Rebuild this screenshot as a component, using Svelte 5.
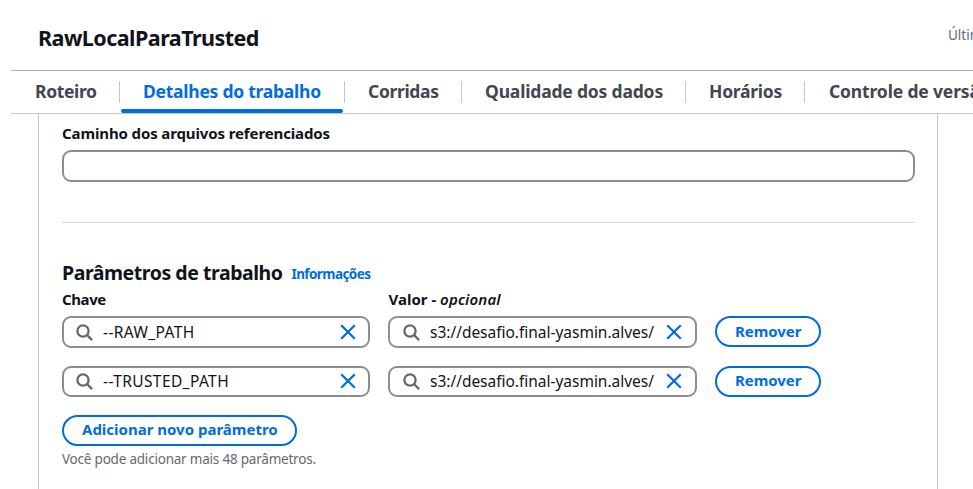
<script>
  const tabs = [
    { id: 'script', label: 'Roteiro', width: 108 },
    { id: 'details', label: 'Detalhes do trabalho', width: 225, active: true },
    { id: 'runs', label: 'Corridas', width: 117 },
    { id: 'quality', label: 'Qualidade dos dados', width: 224 },
    { id: 'schedules', label: 'Horários', width: 119 },
    { id: 'version', label: 'Controle de versão', width: 210 }
  ];
  const parameters = [
    { key: '--RAW_PATH', value: 's3://desafio.final-yasmin.alves/' },
    { key: '--TRUSTED_PATH', value: 's3://desafio.final-yasmin.alves/' }
  ];
</script>

{#snippet field(text, kind)}
  <div class="field {kind}">
    <svg class="search" viewBox="0 0 17 17" aria-hidden="true">
      <circle cx="7" cy="7" r="5.6" />
      <path d="M11 11L16.1 16.1" />
    </svg>
    <span class="entry">{text}</span>
    <svg class="clear" viewBox="0 0 16 16" aria-hidden="true">
      <path d="M1.2 1.2L14.8 14.8M14.8 1.2L1.2 14.8" />
    </svg>
  </div>
{/snippet}

<main>
  <header>
    <h1>RawLocalParaTrusted</h1>
    <span class="modified">Última modificação</span>
  </header>
  <nav>
    {#each tabs as tab}
      <div class="tab" class:active={tab.active} style:width="{tab.width}px">
        <span class="t-{tab.id}">{tab.label}</span>
      </div>
    {/each}
  </nav>
  <section>
    <div class="label path">Caminho dos arquivos referenciados</div>
    <div class="box"></div>
    <hr />
    <div class="heading">
      <h2>Parâmetros de trabalho</h2>
      <span class="info">Informações</span>
    </div>
    <div class="columns">
      <div class="label name">Chave</div>
      <div class="label">Valor - <em>opcional</em></div>
    </div>
    <div class="rows">
      {#each parameters as parameter}
        <div class="row">
          {@render field(parameter.key, 'key')}
          {@render field(parameter.value, 'value')}
          <button class="remove">Remover</button>
        </div>
      {/each}
    </div>
    <button class="add">Adicionar novo parâmetro</button>
    <div class="hint">Você pode adicionar mais 48 parâmetros.</div>
  </section>
</main>

<style>
  :global(body) { background: #fff; overflow: hidden; }
  main {
    box-sizing: border-box;
    width: 973px;
    height: 489px;
    padding-left: 11px;
    overflow: hidden;
    display: flex;
    flex-direction: column;
    font-family: "Noto Sans", "Open Sans", sans-serif;
    color: #0f141a;
    white-space: nowrap;
  }
  h1, h2 { margin: 0; }
  header {
    box-sizing: border-box;
    height: 71px;
    flex: none;
    display: flex;
    justify-content: space-between;
    border-bottom: 1px solid #aab7b8;
    padding-left: 27px;
  }
  h1 { font-size: 21.5px; line-height: 30px; padding-top: 23px; letter-spacing: -0.53px; }
  .modified { width: 25px; font-size: 13.5px; line-height: 20px; padding-top: 25px; color: #656871; }
  nav {
    box-sizing: border-box;
    height: 43px;
    flex: none;
    display: flex;
    border-bottom: 1px solid #c6c6cd;
  }
  .tab {
    box-sizing: border-box;
    position: relative;
    flex: none;
    height: 42px;
    padding-left: 24px;
    font-size: 17.5px;
    font-weight: 700;
    line-height: 41px;
    color: #424650;
  }
  .t-script { letter-spacing: -0.35px; }
  .t-details { letter-spacing: -0.25px; }
  .t-runs { letter-spacing: -0.35px; }
  .t-quality { letter-spacing: -0.18px; }
  .t-schedules { letter-spacing: -0.25px; }
  .t-version { letter-spacing: -0.15px; padding-left: 1px; }
  .tab:not(:last-child)::after {
    content: "";
    position: absolute;
    right: -1px;
    top: 10px;
    width: 1px;
    height: 22px;
    background: #c6c6cd;
  }
  .tab.active { color: #006ce0; }
  .tab.active::before {
    content: "";
    position: absolute;
    left: 2px;
    right: 1px;
    bottom: 0;
    height: 4px;
    border-radius: 2px;
    background: #006ce0;
  }
  section {
    box-sizing: border-box;
    width: 900px;
    flex: 1;
    margin-left: 27px;
    padding: 8px 22px 0 23px;
    border: solid #c6c6cd;
    border-width: 0 1px;
  }
  .label { font-size: 15px; font-weight: 700; line-height: 22px; }
  .path { height: 28px; letter-spacing: -0.12px; }
  .name { letter-spacing: -0.4px; }
  em { font-weight: 600; letter-spacing: 0.15px; }
  .box, .field {
    box-sizing: border-box;
    border: 2px solid #8c8c94;
    border-radius: 9px;
  }
  .box { height: 32px; }
  hr { margin: 40px 0 0; border: 0; height: 1px; background: #d5dbdb; }
  .heading { display: flex; align-items: flex-start; height: 29px; padding-top: 36px; }
  h2 { width: 229.5px; font-size: 19.5px; line-height: 28px; letter-spacing: -0.45px; }
  .info { font-size: 13.5px; font-weight: 700; line-height: 30px; letter-spacing: -0.58px; color: #006ce0; }
  .columns { display: grid; grid-template-columns: 326.5px 1fr; height: 28px; }
  .rows { display: flex; flex-direction: column; gap: 18px; }
  .row { display: flex; height: 31.5px; }
  .field {
    display: flex;
    align-items: center;
    height: 31.5px;
    margin-right: 18px;
    padding: 0 12px;
  }
  .key { width: 308px; letter-spacing: 0.4px; }
  .value { width: 309px; padding-left: 13px; padding-right: 13px; letter-spacing: -0.02px; }
  .search { width: 17px; height: 17px; margin-top: 1px; fill: none; stroke: #656871; stroke-width: 2.3; }
  .clear { width: 16px; height: 16px; fill: none; stroke: #006ce0; stroke-width: 2.2; }
  .entry { flex: 1; padding-left: 10px; font-size: 15.5px; }
  button {
    box-sizing: border-box;
    display: block;
    height: 31px;
    border: 2px solid #006ce0;
    border-radius: 16px;
    background: #fff;
    padding: 0 18px 1px;
    font: 700 15px/26px "Noto Sans", "Open Sans", sans-serif;
    letter-spacing: -0.05px;
    color: #006ce0;
    text-align: left;
  }
  .remove { width: 106px; }
  .row:last-child .remove { padding-bottom: 2px; line-height: 25px; }
  .add { width: 235px; margin-top: 18px; letter-spacing: 0; padding-bottom: 2px; line-height: 25px; }
  .hint { font-size: 13.5px; line-height: 20px; padding-top: 3px; letter-spacing: -0.21px; color: #656871; }
</style>
